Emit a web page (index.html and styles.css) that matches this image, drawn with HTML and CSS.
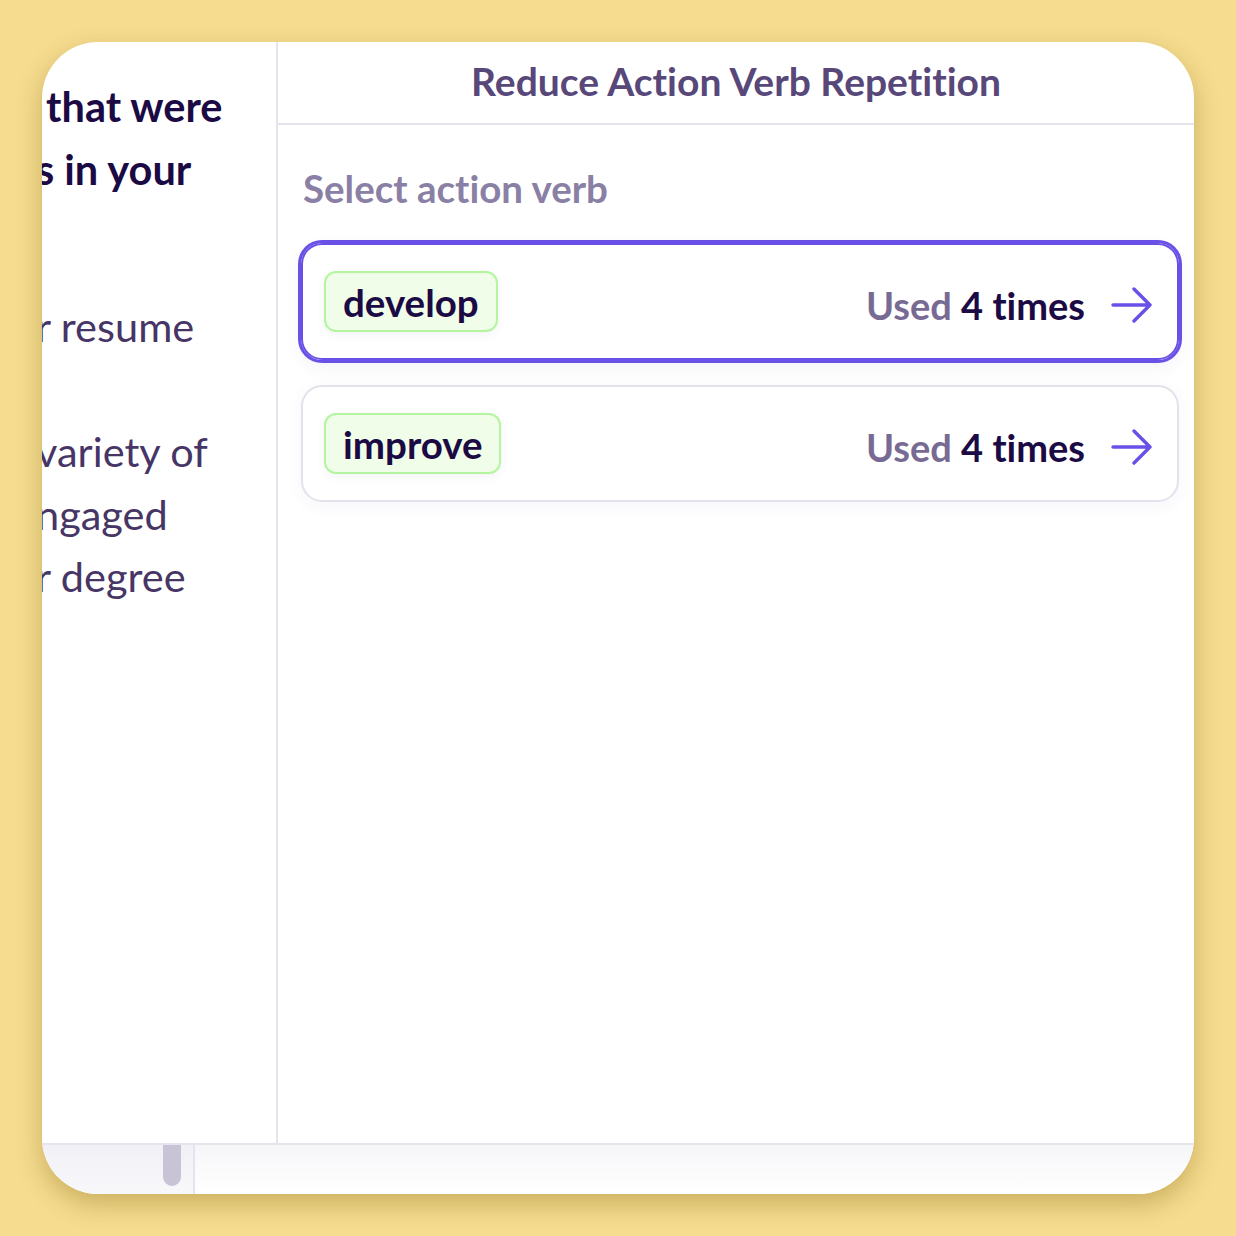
FILE: index.html
```html
<!DOCTYPE html>
<html lang="en">
<head>
    <meta charset="UTF-8">
    <meta name="viewport" content="width=device-width, initial-scale=1.0">
    <title>Reduce Action Verb Repetition</title>
    <link rel="stylesheet" href="styles.css">
</head>
<body>
    <div class="window">
        <div class="main">
            <div class="side">
                <div class="notes">
                    <p class="lead">&nbsp;that were<br>s in your</p>
                    <p class="text">r resume</p>
                    <p class="text">variety of<br>ngaged<br>r degree</p>
                </div>
            </div>
            <div class="panel">
                <div class="panel-head">Reduce Action Verb Repetition</div>
                <div class="panel-body">
                    <div class="label">Select action verb</div>
                    <div class="verb-list">
                        <div class="verb-card selected">
                            <span class="chip">develop</span>
                            <div class="usage">
                                <span class="usage-text"><span class="used">Used</span> <span class="count">4 times</span></span>
                                <svg class="arrow" width="42" height="36" viewBox="0 0 42 36">
                                    <path d="M2 18H39M23 2L39 18L23 34" fill="none" stroke="#6a50e6" stroke-width="3.4" stroke-linecap="round" stroke-linejoin="round"/>
                                </svg>
                            </div>
                        </div>
                        <div class="verb-card">
                            <span class="chip">improve</span>
                            <div class="usage">
                                <span class="usage-text"><span class="used">Used</span> <span class="count">4 times</span></span>
                                <svg class="arrow" width="42" height="36" viewBox="0 0 42 36">
                                    <path d="M2 18H39M23 2L39 18L23 34" fill="none" stroke="#6a50e6" stroke-width="3.4" stroke-linecap="round" stroke-linejoin="round"/>
                                </svg>
                            </div>
                        </div>
                    </div>
                </div>
            </div>
        </div>
        <div class="footer">
            <div class="foot-left">
                <div class="thumb"></div>
            </div>
            <div class="foot-right"></div>
        </div>
    </div>
</body>
</html>
```

FILE: styles.css
```css
body {
    margin: 0;
    padding: 42px;
    background-color: #f6dc8e;
    font-family: 'Lato', 'Open Sans', sans-serif;
    font-variant-ligatures: no-common-ligatures;
}
.window {
    width: 1152px;
    height: 1152px;
    background: white;
    border-radius: 56px;
    overflow: hidden;
    box-shadow: 0 10px 26px rgba(110, 80, 0, 0.32);
}
.main {
    display: flex;
    height: 1101px;
    border-bottom: 2px solid #e5e3ec;
}
.side {
    width: 234px;
    border-right: 2px solid #e5e3ec;
    overflow: hidden;
}
.notes {
    margin-left: -6px;
    padding-top: 33px;
    font-size: 41.5px;
    line-height: 62.5px;
    white-space: nowrap;
}
.notes p {
    margin: 0;
}
.lead {
    font-weight: 700;
    color: #1b0a43;
    margin-bottom: 95px !important;
}
.text {
    color: #463565;
    margin-bottom: 62.5px !important;
}
.panel {
    flex: 1;
    display: flex;
    flex-direction: column;
}
.panel-head {
    height: 77px;
    padding-bottom: 4px;
    border-bottom: 2px solid #e5e3ec;
    display: flex;
    align-items: center;
    justify-content: center;
    font-size: 39px;
    font-weight: 700;
    color: #584879;
}
.panel-body {
    padding: 0 15px 0 23px;
}
.label {
    margin-top: 40px;
    padding-left: 2px;
    font-size: 38.5px;
    font-weight: 700;
    color: #8a80a5;
}
.verb-list {
    display: flex;
    flex-direction: column;
    gap: 25px;
    margin-top: 32px;
}
.verb-card {
    height: 117px;
    box-sizing: border-box;
    border: 2px solid #e4e1ec;
    border-radius: 21px;
    padding: 0 24px 0 21px;
    display: flex;
    align-items: center;
    justify-content: space-between;
    box-shadow: 0 4px 16px rgba(70, 50, 130, 0.05);
}
.verb-card.selected {
    border-color: #6a50e6;
    box-shadow: 0 0 0 3px #6a50e6, 0 6px 18px rgba(70, 50, 130, 0.07);
}
.chip {
    height: 61px;
    box-sizing: border-box;
    padding: 0 17px;
    border: 2px solid #b4f59f;
    border-radius: 12px;
    background: #effde9;
    display: flex;
    align-items: center;
    font-size: 38.5px;
    font-weight: 700;
    color: #1b0a43;
    box-shadow: 0 3px 10px rgba(70, 50, 130, 0.06);
}
.usage {
    display: flex;
    align-items: center;
    padding-top: 6px;
    font-size: 38px;
    font-weight: 700;
    white-space: nowrap;
}
.used {
    color: #776a93;
}
.count {
    color: #1b0a43;
}
.arrow {
    margin-left: 26px;
}
.footer {
    display: flex;
    height: 49px;
}
.foot-left {
    width: 151px;
    border-right: 2px solid #e5e3ec;
    background: linear-gradient(#f1f0f6, #f8f8fb);
    position: relative;
}
.thumb {
    position: absolute;
    left: 121px;
    top: 0;
    width: 18px;
    height: 41px;
    border-radius: 0 0 9px 9px;
    background: #c8c3d5;
}
.foot-right {
    flex: 1;
    background: linear-gradient(#f6f6f9, #ffffff);
}
```
